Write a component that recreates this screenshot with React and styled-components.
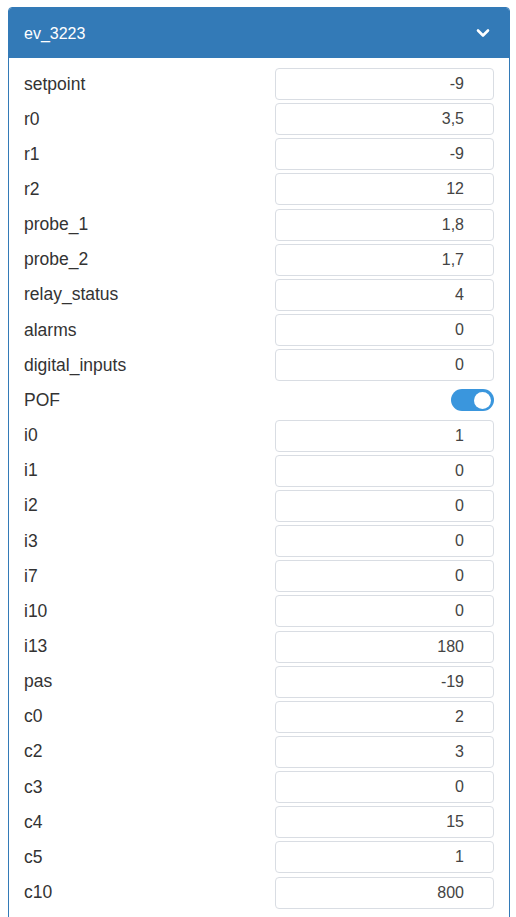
import styled, { createGlobalStyle } from "styled-components";

const GlobalStyle = createGlobalStyle`
  html, body { margin: 0; padding: 0; background: #fff; }
  body { font-family: "Liberation Sans", Arial, sans-serif; color: #333; }
`;

const rows = [
    ["setpoint", "-9"],
    ["r0", "3,5"],
    ["r1", "-9"],
    ["r2", "12"],
    ["probe_1", "1,8"],
    ["probe_2", "1,7"],
    ["relay_status", "4"],
    ["alarms", "0"],
    ["digital_inputs", "0"],
    ["POF", true],
    ["i0", "1"],
    ["i1", "0"],
    ["i2", "0"],
    ["i3", "0"],
    ["i7", "0"],
    ["i10", "0"],
    ["i13", "180"],
    ["pas", "-19"],
    ["c0", "2"],
    ["c2", "3"],
    ["c3", "0"],
    ["c4", "15"],
    ["c5", "1"],
    ["c10", "800"],
];

const App = () => {
    return <Page>
        <GlobalStyle />
        <Panel>
            <Heading>
                <Title>ev_3223</Title>
                <Chevron viewBox="0 0 14 10">
                    <path d="M2 2.5 L7 7.5 L12 2.5" fill="none" stroke="#fff" strokeWidth="2.6" strokeLinecap="round" strokeLinejoin="round" />
                </Chevron>
            </Heading>
            <Body>
                {rows.map(([name, value]) => (
                    <Row key={name}>
                        <Label>{name}</Label>
                        {value === true
                            ? <SwitchCell><Switch on={true}><Knob /></Switch></SwitchCell>
                            : <Field type="text" defaultValue={value} readOnly />}
                    </Row>
                ))}
            </Body>
        </Panel>
    </Page>
};

const Page = styled.div`
  padding: 7px 6px 0 8px;
`;

const Panel = styled.div`
  border: 1px solid #337ab7;
  border-radius: 4px;
  overflow: hidden;
`;

const Heading = styled.div`
  background-color: #337ab7;
  height: 49px;
  display: flex;
  align-items: center;
  justify-content: space-between;
  padding: 0 19px 0 15px;
`;

const Title = styled.span`
  color: #fff;
  font-size: 16px;
  padding-top: 2px;
`;

const Chevron = styled.svg`
  width: 14px;
  height: 10px;
`;

const Body = styled.div`
  border-top: 1px solid #337ab7;
  padding: 10px 15px 16px 15px;
  display: flex;
  flex-direction: column;
  gap: 3.17px;
`;

const Row = styled.div`
  display: grid;
  grid-template-columns: 1fr 219px;
  align-items: center;
  height: 32px;
`;

const Label = styled.span`
  font-size: 17.5px;
  color: #333;
`;

const Field = styled.input`
  box-sizing: border-box;
  width: 219px;
  height: 32px;
  border: 1px solid #d9dde3;
  border-radius: 4px;
  text-align: right;
  padding: 0 29px 0 10px;
  font-family: "Liberation Sans", Arial, sans-serif;
  font-size: 16px;
  color: #444;
  background: #fff;
  outline: none;
`;

const SwitchCell = styled.div`
  display: flex;
  justify-content: flex-end;
`;

const Switch = styled.div`
  width: 43px;
  height: 22px;
  border-radius: 11px;
  background-color: ${props => props.on ? "#3a96dd" : "#ccc"};
  display: flex;
  align-items: center;
  justify-content: ${props => props.on ? "flex-end" : "flex-start"};
  padding: 0 3px;
  box-sizing: border-box;
`;

const Knob = styled.div`
  width: 17px;
  height: 17px;
  border-radius: 50%;
  background: #fff;
`;

export default App;
